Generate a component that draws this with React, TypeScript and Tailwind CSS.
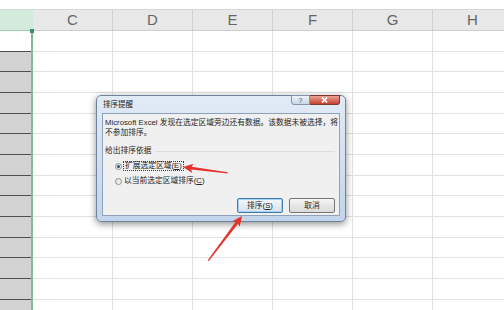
import React from "react";

const COLS = ["C", "D", "E", "F", "G", "H"];
const ROWS = Array.from({ length: 14 }, (_, i) => i);

const Arrow = ({ x, y, angle, length }: { x: number; y: number; angle: number; length: number }) => (
  <g transform={`translate(${x} ${y}) rotate(${angle})`}>
    <polygon
      points={`0,0 -10,-4.6 -8.5,-1.5 -${length},-0.6 -${length},0.7 -8.5,1.5 -10,4.6`}
      fill="#e3342c"
    />
  </g>
);

const Radio = ({ checked }: { checked?: boolean }) => (
  <span className="w-[7px] h-[7px] rounded-full border border-[#8a8c8e] bg-linear-to-br from-[#dcdcdc] to-[#fafafa] flex items-center justify-center shrink-0">
    {checked && <span className="w-[3px] h-[3px] rounded-full bg-[#2f4e73]" />}
  </span>
);

export default function App() {
  return (
    <div className="relative w-[504px] h-[310px] overflow-hidden bg-white font-['Liberation_Sans','Noto_Sans_CJK_SC',sans-serif]">
      {/* strip above the column headers */}
      <div className="h-[10px] bg-white border-b border-[#d6d6d6]" />

      {/* column headers */}
      <div className="flex h-[21px]">
        <div className="w-[33px] shrink-0 bg-[#d3ebdd] border-b border-[#9ccfb2]" />
        {COLS.map((c) => (
          <div
            key={c}
            className="w-[80px] shrink-0 flex items-center justify-center bg-[#e8e8e8] border-r border-b border-r-[#d0d0d0] border-b-[#cdcdcd] text-[15px] text-[#666666]"
          >
            {c}
          </div>
        ))}
      </div>

      {/* sheet body */}
      <div className="flex">
        <div className="w-[31px] shrink-0 flex flex-col">
          {ROWS.map((r) => (
            <div
              key={r}
              className={
                r === 0
                  ? "h-[20.67px] bg-white border-b border-[#4f4f4f]"
                  : "h-[20.67px] bg-[#d2d2d2] border-b border-[#4f4f4f]"
              }
            />
          ))}
        </div>
        <div className="relative w-[2px] shrink-0 bg-[#7dbb9a]">
          <div className="absolute -top-[2px] -left-px w-[4px] h-[4px] bg-[#3f8a62]" />
        </div>
        <div className="flex flex-col">
          {ROWS.map((r) => (
            <div key={r} className="flex h-[20.67px]">
              {COLS.map((c) => (
                <div key={c} className="w-[80px] shrink-0 border-r border-b border-[#e1e1e1]" />
              ))}
            </div>
          ))}
        </div>
      </div>

      {/* sort warning dialog */}
      <div className="absolute left-[96px] top-[95px] w-[250px] h-[127px] flex flex-col rounded-[5px] border border-[#6f849c] bg-linear-to-b from-[#e1ebf6] to-[#c3d5eb] px-[5px] pb-[5px] shadow-[0_2px_7px_rgba(0,0,0,0.45)]">
        <div className="flex h-[17px] items-start justify-between">
          <span className="self-center pl-[1px] text-[7.5px] leading-none text-[#1c1c1c]">排序提醒</span>
          <div className="flex -mt-px">
            <div className="w-[19px] h-[10px] flex items-center justify-center rounded-bl-[3px] border border-[#8196ad] bg-linear-to-b from-[#eef3f9] to-[#c7d6e7] text-[7px] leading-none text-[#4a5563]">
              ?
            </div>
            <div className="w-[30px] h-[10px] flex items-center justify-center rounded-br-[3px] border border-l-0 border-[#7b3a30] bg-linear-to-b from-[#e9a295] to-[#c4402d]">
              <svg width="7" height="6" viewBox="0 0 7 6">
                <path d="M1 0.5 L6 5.5 M6 0.5 L1 5.5" stroke="#ffffff" strokeWidth="1.6" />
              </svg>
            </div>
          </div>
        </div>

        <div className="flex-1 flex flex-col bg-[#f0f0f0] border border-[#8ea2b9] pl-[2px] pr-[4px] pt-[4px] text-[7.75px] text-[#262626]">
          <p className="leading-[10px] whitespace-nowrap">
            Microsoft Excel 发现在选定区域旁边还有数据。该数据未被选择，将
            <br />
            不参加排序。
          </p>

          <div className="mt-[8px] flex h-[10px] items-center gap-[3px]">
            <span className="leading-none">给出排序依据</span>
            <span className="flex-1 h-px bg-[#dcdcdc]" />
          </div>

          <div className="mt-[5px] flex h-[10px] items-center gap-[1px] pl-[10px]">
            <Radio checked />
            <span className="border border-dotted border-[#3a3a3a] px-[1px] leading-[8px]">
              扩展选定区域(<span className="underline">E</span>)
            </span>
          </div>

          <div className="mt-[5px] flex h-[10px] items-center gap-[2px] pl-[10px]">
            <Radio />
            <span className="leading-none">
              以当前选定区域排序(<span className="underline">C</span>)
            </span>
          </div>

          <div className="mt-[12px] flex justify-end gap-[6px]">
            <button className="w-[46px] h-[15px] flex items-center justify-center rounded-[2px] border border-[#3d7bab] bg-linear-to-b from-[#f4f8fc] to-[#d4e2ee] shadow-[inset_0_0_0_1px_#a9d2ee] leading-none">
              排序(<span className="underline">S</span>)
            </button>
            <button className="w-[46px] h-[15px] flex items-center justify-center rounded-[2px] border border-[#777777] bg-linear-to-b from-[#f5f5f5] to-[#dadada] leading-none">
              取消
            </button>
          </div>
        </div>
      </div>

      {/* red pointer arrows */}
      <svg className="absolute inset-0 pointer-events-none" width="504" height="310">
        <Arrow x={183} y={167} angle={187.6} length={45} />
        <Arrow x={242} y={216} angle={-52.9} length={56} />
      </svg>
    </div>
  );
}
